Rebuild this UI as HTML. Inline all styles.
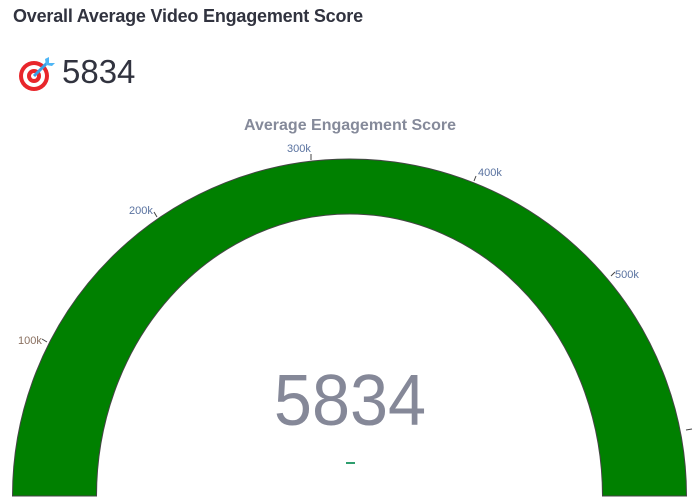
<!DOCTYPE html>
<html><head><style>
body{margin:0;width:694px;height:501px;overflow:hidden;background:#fff;font-family:"Liberation Sans",sans-serif;position:relative}
.h{position:absolute;left:13px;top:6px;font-size:18px;font-weight:bold;color:#31333f;letter-spacing:-0.2px}
.v{position:absolute;left:62px;top:53px;font-size:33px;color:#31333f}
</style></head><body>
<div class="h">Overall Average Video Engagement Score</div>
<svg style="position:absolute;left:18px;top:56px" width="38" height="36" viewBox="0 0 38 36">
<circle cx="16" cy="20" r="15" fill="#e8262b"/><circle cx="16" cy="20" r="11" fill="#fff"/><circle cx="16" cy="20" r="7" fill="#e8262b"/><circle cx="16" cy="20" r="3" fill="#fff"/>
<line x1="16" y1="20" x2="30" y2="6" stroke="#3aa0e8" stroke-width="3"/>
<path d="M27 3 L31 1 L31 7 L37 7 L34 10 L28 9 Z" fill="#4fb6f5"/>
</svg>
<div class="v">5834</div>
<svg style="position:absolute;left:0;top:0" width="694" height="501">
<text x="350" y="130" text-anchor="middle" font-family="Liberation Sans" font-weight="bold" font-size="16" fill="#858a9a">Average Engagement Score</text>
<path d="M12.5 496 A337 337 0 0 1 686.5 496 L602.5 496 A253 282 0 0 0 96.5 496 Z" fill="#008000" stroke="#444" stroke-width="1"/>
<g stroke="#444" stroke-width="1">
<line x1="47" y1="342" x2="42" y2="339"/><line x1="157" y1="217" x2="154" y2="212"/><line x1="311" y1="160" x2="311" y2="154"/><line x1="474" y1="181" x2="476" y2="176"/><line x1="611" y1="276" x2="615" y2="272"/><line x1="686" y1="430" x2="692" y2="429"/>
</g>
<g font-family="Liberation Sans" font-size="11" fill="#5a73a0">
<text x="18" y="344" fill="#8a7060">100k</text><text x="129" y="214">200k</text><text x="287" y="152">300k</text><text x="478" y="176">400k</text><text x="615" y="278">500k</text>
</g>
<text x="350" y="425" text-anchor="middle" font-family="Liberation Sans" font-size="72" fill="#858898" transform="translate(350 0) scale(0.95 1) translate(-350 0)">5834</text>
<rect x="346" y="462" width="9" height="2" fill="#2e9e6e"/>
</svg>
</body></html>
